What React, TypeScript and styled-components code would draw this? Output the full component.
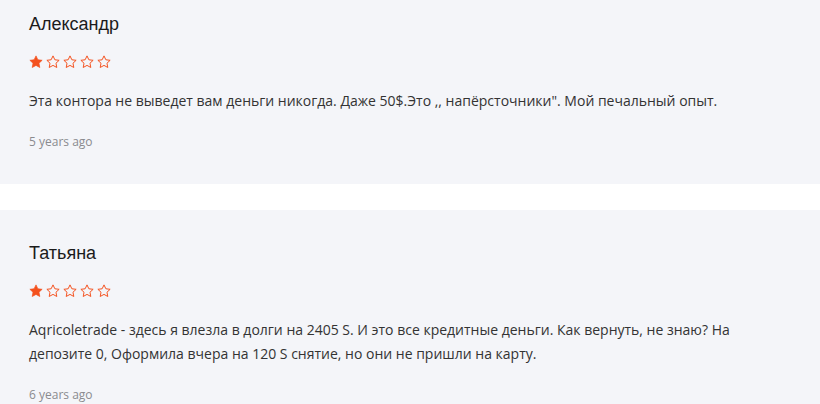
import React from "react";
import styled, { createGlobalStyle } from "styled-components";

const Global = createGlobalStyle`
  html, body { margin: 0; padding: 0; background: #ffffff; }
  body { overflow: hidden; }
`;

const List = styled.div`
  display: flex;
  flex-direction: column;
  gap: 26px;
  margin-top: -19px;
`;

const Card = styled.article`
  background: #f4f5f9;
  padding: 31px 29px 33px;
  display: flex;
  flex-direction: column;
`;

const Name = styled.h3`
  margin: 0;
  font-family: "Liberation Sans", Arial, sans-serif;
  font-weight: 400;
  font-size: 18px;
  line-height: 24px;
  color: #1b1b1b;
`;

const Stars = styled.div`
  display: flex;
  gap: 3px;
  margin-top: 19px;
  height: 14px;
  align-items: center;
`;

const Text = styled.p`
  margin: 20px 0 0;
  font-family: "Open Sans", sans-serif;
  font-size: 14px;
  line-height: 24px;
  color: #333333;
  max-width: 750px;
`;

const Date = styled.span`
  margin-top: 20px;
  font-family: "Open Sans", sans-serif;
  font-size: 12px;
  line-height: 18px;
  color: #8a8b8f;
`;

const STAR = "M12 1.5l3.2 6.7 7.3.9-5.4 5 1.4 7.3L12 17.8l-6.5 3.6 1.4-7.3-5.4-5 7.3-.9z";

const Star = ({ filled }: { filled: boolean }) => (
  <svg width="14" height="14" viewBox="0 0 24 24">
    <path
      d={STAR}
      fill={filled ? "#f4511e" : "none"}
      stroke="#f4511e"
      strokeWidth={filled ? 1.2 : 1.7}
      strokeLinejoin="round"
    />
  </svg>
);

const Rating = ({ value }: { value: number }) => (
  <Stars>
    {[0, 1, 2, 3, 4].map((i) => (
      <Star key={i} filled={i < value} />
    ))}
  </Stars>
);

const reviews = [
  {
    name: "Александр",
    rating: 1,
    text: "Эта контора не выведет вам деньги никогда. Даже 50$.Это ,, напёрсточники\". Мой печальный опыт.",
    date: "5 years ago",
  },
  {
    name: "Татьяна",
    rating: 1,
    text: "Aqricoletrade - здесь я влезла в долги на 2405 S. И это все кредитные деньги. Как вернуть, не знаю? На депозите 0, Оформила вчера на 120 S снятие, но они не пришли на карту.",
    date: "6 years ago",
  },
];

export default function App() {
  return (
    <>
      <Global />
      <List>
        {reviews.map((r) => (
          <Card key={r.name}>
            <Name>{r.name}</Name>
            <Rating value={r.rating} />
            <Text>{r.text}</Text>
            <Date>{r.date}</Date>
          </Card>
        ))}
      </List>
    </>
  );
}
